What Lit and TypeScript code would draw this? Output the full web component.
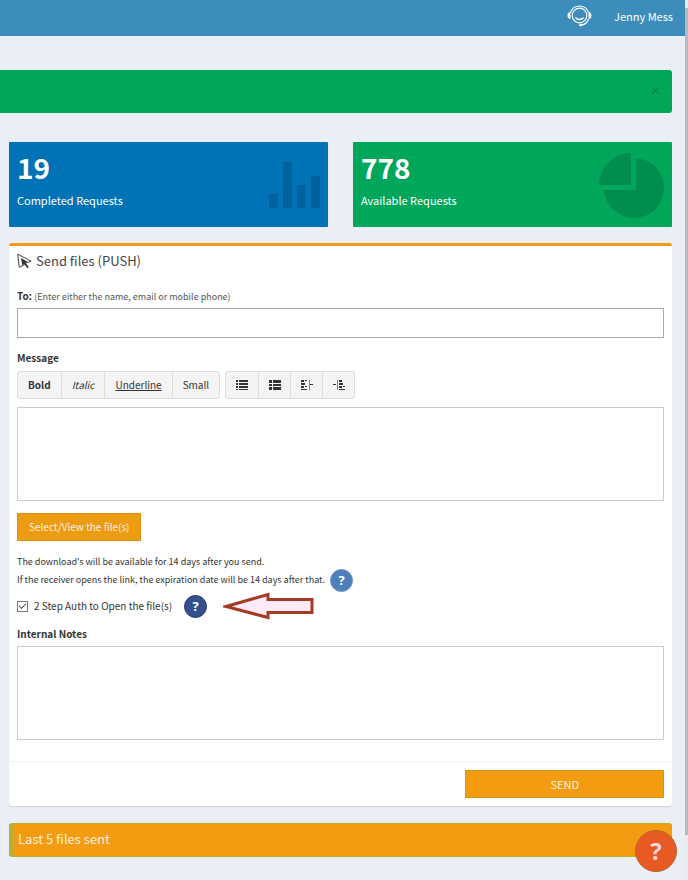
import { LitElement, html, css, svg } from "lit";
import { customElement, property } from "lit/decorators.js";

const listIcon = svg`<path d="M0 1h2v2H0zM3 1h9v2H3zM0 4h2v2H0zM3 4h9v2H3zM0 7h2v2H0zM3 7h9v2H3zM0 10h2v1H0zM3 10h9v1H3z"/>`;
const thListIcon = svg`<path d="M0 1h3v3H0zM4 1h8v3H4zM0 5h3v2H0zM4 5h8v2H4zM0 8h3v3H0zM4 8h8v3H4z"/>`;
const outdentIcon = svg`<path d="M0 1h3v2H0zM4 1h2v1H4zM0 4h4v2H0zM0 7h3v2H0zM4 7h2v1H4zM0 10h6v1H0zM9 5h3v1H9z"/><path d="M8 1h1v10H8z" opacity=".6"/>`;
const indentIcon = svg`<path d="M6 1h3v2H6zM6 4h4v2H6zM6 7h3v2H6zM10 7h2v1h-2zM6 10h6v1H6zM0 5h3v1H0z"/><path d="M4 1h1v10H4z" opacity=".6"/>`;

@customElement("help-dot")
export class HelpDot extends LitElement {
  @property() topic = "";

  static styles = css`
    :host {
      display: inline-flex;
      flex: none;
      --dot: #4e7fb8;
      --ring: #6b93c6;
    }
    .dot {
      width: 23px;
      height: 23px;
      padding: 0;
      border: 1px solid var(--ring);
      border-radius: 50%;
      background: var(--dot);
      color: #fff;
      font: 700 13px/20px "Open Sans", sans-serif;
      text-align: center;
    }
  `;

  render() {
    return html`<button class="dot" type="button" aria-label=${this.topic}>?</button>`;
  }
}

@customElement("app-root")
export class AppRoot extends LitElement {
  static styles = css`
    :host {
      display: block;
      min-height: 100vh;
      background: #ebeef4;
      color: #333;
      font: 10px/18px "Noto Sans CJK SC", "Noto Sans", sans-serif;
    }
    * {
      box-sizing: border-box;
    }
    h2,
    h3,
    p {
      margin: 0;
      font-weight: 400;
    }
    button,
    input,
    textarea {
      font: inherit;
      margin: 0;
    }
    .topbar {
      display: flex;
      align-items: center;
      justify-content: flex-end;
      gap: 22px;
      height: 36px;
      padding: 0 15px 4px 0;
      background: #3c8dbc;
      font-size: 11px;
    }
    .topbar a {
      color: #fff;
      text-decoration: none;
    }
    .topbar svg {
      display: block;
    }
    .alert {
      display: flex;
      align-items: center;
      justify-content: flex-end;
      height: 43px;
      margin: 34px 16px 0 0;
      padding: 0 12px 4px 0;
      background: #00a65a;
      border-radius: 0 3px 3px 0;
    }
    .close {
      width: 10px;
      height: 16px;
      padding: 0;
      border: 0;
      background: none;
      color: #05713f;
      font-size: 11px;
      line-height: 16px;
    }
    main {
      padding: 29px 16px 23px 9px;
    }
    .stats {
      display: grid;
      grid-template-columns: 1fr 1fr;
      gap: 25px;
    }
    .stat {
      display: flex;
      justify-content: space-between;
      height: 85px;
      padding: 8px;
      border-radius: 1px;
      color: #fff;
    }
    .stat svg {
      overflow: visible;
    }
    .blue {
      background: #0073b7;
    }
    .green {
      background: #00a65a;
    }
    .count {
      font-size: 28px;
      line-height: 34px;
      font-weight: 700;
    }
    .caption {
      margin-top: 7px;
      font-size: 11px;
    }
    .box {
      margin-top: 16px;
      border-top: 3px solid #f39c12;
      border-radius: 3px;
      background: #fff;
      box-shadow: 0 1px 1px rgba(0, 0, 0, 0.12);
    }
    .head {
      display: flex;
      align-items: center;
      gap: 4px;
      height: 30px;
      padding: 0 8px;
    }
    .head h2 {
      font-size: 13px;
      line-height: 20px;
      color: #444;
    }
    .body {
      padding: 11px 8px 21px;
    }
    .label {
      display: block;
      font-weight: 700;
      line-height: 18px;
    }
    .label small {
      font-size: 9px;
      font-weight: 400;
      color: #555;
    }
    .field {
      display: block;
      width: 100%;
      padding: 4px 8px;
      border: 1px solid #ccc;
      border-radius: 0;
      background: #fff;
      resize: none;
    }
    .line {
      height: 30px;
      margin: 2px 0 11px;
      border-color: #aaa;
    }
    .area {
      height: 94px;
    }
    .tools {
      display: flex;
      gap: 5px;
      margin: 4px 0 8px;
    }
    .group {
      display: flex;
      border: 1px solid #ddd;
      border-radius: 3px;
      background: #f4f4f4;
    }
    .tool {
      display: flex;
      align-items: center;
      justify-content: center;
      height: 26px;
      padding: 0 10px;
      border: 0;
      border-left: 1px solid #ddd;
      background: none;
      color: #333;
    }
    .tool:first-child {
      border-left: 0;
    }
    .glyph {
      width: 32px;
      padding: 0;
    }
    .tool svg {
      display: block;
      fill: #333;
    }
    .bold {
      font-weight: 700;
    }
    .italic {
      font-style: italic;
    }
    .underline {
      text-decoration: underline;
    }
    .orange {
      height: 28px;
      padding: 0 11px;
      border: 1px solid #e08e0b;
      background: #f39c12;
      color: #ffeedd;
    }
    .select {
      display: block;
      margin: 12px 0;
      background: #eb9c12;
    }
    .note {
      display: flex;
      align-items: center;
      gap: 5px;
      height: 18px;
      font-size: 9px;
    }
    .check {
      display: flex;
      align-items: center;
      height: 34px;
    }
    .check label {
      display: flex;
      align-items: center;
      gap: 6px;
      margin-right: 12px;
    }
    .box-input {
      appearance: none;
      width: 11px;
      height: 11px;
      border: 1px solid #777;
      background: #fff;
      display: grid;
      place-items: center;
    }
    .box-input:checked::before {
      content: "";
      width: 6px;
      height: 3px;
      margin-bottom: 2px;
      border: solid #555;
      border-width: 0 0 1px 1px;
      rotate: -45deg;
    }
    .dark {
      --dot: #35508c;
      --ring: #263a6e;
    }
    .arrow {
      display: block;
      margin-left: 16px;
    }
    .notes {
      margin: 2px 0 3px;
    }
    .foot {
      display: flex;
      justify-content: flex-end;
      padding: 8px;
      border-top: 1px solid #f4f4f4;
    }
    .send {
      width: calc(31% - 2px);
      border-color: #d0980f;
      font-size: 11px;
    }
    .recent {
      display: flex;
      align-items: center;
      height: 34px;
      margin-top: 17px;
      padding: 0 8px 2px 5px;
      border: 1px solid #b8b030;
      border-left-width: 4px;
      border-radius: 3px;
      background: #f39c12;
    }
    .recent h3 {
      color: #ffeedd;
      font-size: 13px;
      line-height: 20px;
    }
    .chat {
      position: fixed;
      right: 11px;
      bottom: 8px;
      width: 42px;
      height: 42px;
      padding: 0;
      border: 1px solid #b4652a;
      border-radius: 50%;
      background: #e85a24;
      color: #ffd8e0;
      font: 700 24px/38px "Open Sans", sans-serif;
    }
    .rail {
      position: fixed;
      top: 0;
      right: 0;
      bottom: 0;
      width: 3px;
      background: #e9ebee;
    }
    .thumb {
      height: 94%;
      margin-top: 8px;
      background: #b9babd;
    }
  `;

  private icon(shape: unknown) {
    return html`<svg width="12" height="12" viewBox="0 0 12 12" shape-rendering="crispEdges" aria-hidden="true">${shape}</svg>`;
  }

  render() {
    return html`
      <header class="topbar">
        <a href="#support" aria-label="Support">
          <svg width="25" height="22" viewBox="0 0 25 22" fill="none" stroke="#fff">
            <path d="M3.500 7.500A9.500 9.500 0 0 1 21.500 7.500" stroke-width="1.100" />
            <circle cx="12.500" cy="10.500" r="7.300" stroke-width="1.200" />
            <path d="M3.500 7v7C1.500 14 .5 12.500 .5 10.500S1.500 7 3.500 7zM21.500 7v7c2 0 3-1.500 3-3.500S23.500 7 21.500 7z" fill="#fff" stroke="none" />
            <path d="M8.500 12.500c1.200 2.600 6.800 2.600 8 0" stroke-width="1.600" />
            <path d="M21.500 14c-1 3.500-3.500 5.500-7 6" stroke-width="1.100" />
            <ellipse cx="14" cy="20" rx="2" ry="1.300" fill="#fff" stroke="none" />
          </svg>
        </a>
        <a href="#account">Jenny Mess</a>
      </header>

      <div class="alert" role="status">
        <button class="close" type="button" aria-label="Close">×</button>
      </div>

      <main>
        <section class="stats">
          <div class="stat blue">
            <div>
              <div class="count">19</div>
              <div class="caption">Completed Requests</div>
            </div>
            <svg width="51" height="66" viewBox="0 0 51 66" fill="#00629c" aria-hidden="true">
              <path d="M0 44h9v14H0zM14 12h9v46H14zM28 35h9v23h-9zM42 26h9v32h-9z" />
            </svg>
          </div>
          <div class="stat green">
            <div>
              <div class="count">778</div>
              <div class="caption">Available Requests</div>
            </div>
            <svg width="65" height="67" viewBox="0 0 65 67" fill="#008d4d" aria-hidden="true">
              <path d="M32 3v32H0A32 32 0 0 1 32 3zM37 8A30 30 0 1 1 5 40h32z" />
            </svg>
          </div>
        </section>

        <form class="box" @submit=${(e: Event) => e.preventDefault()}>
          <div class="head">
            <svg width="15" height="16" viewBox="0 0 15 16" fill="none" stroke="#444" aria-hidden="true">
              <path d="M8 11.500L2.200 14.200.7 1.200 14.200 8.200 10.500 9.500" stroke-width="1" />
              <path d="M4 5l7.500 4.200-2.700.6 3 4.400-1.500 1-2.900-4.500L5.300 12.500z" fill="#333" stroke="none" />
            </svg>
            <h2>Send files (PUSH)</h2>
          </div>
          <div class="body">
            <label class="label" for="to">To: <small>(Enter either the name, email or mobile phone)</small></label>
            <input class="field line" id="to" type="text" />

            <label class="label" for="message">Message</label>
            <div class="tools">
              <div class="group">
                <button class="tool bold" type="button">Bold</button>
                <button class="tool italic" type="button">Italic</button>
                <button class="tool underline" type="button">Underline</button>
                <button class="tool" type="button">Small</button>
              </div>
              <div class="group">
                <button class="tool glyph" type="button" aria-label="Bulleted list">${this.icon(listIcon)}</button>
                <button class="tool glyph" type="button" aria-label="Numbered list">${this.icon(thListIcon)}</button>
                <button class="tool glyph" type="button" aria-label="Outdent">${this.icon(outdentIcon)}</button>
                <button class="tool glyph" type="button" aria-label="Indent">${this.icon(indentIcon)}</button>
              </div>
            </div>
            <textarea class="field area" id="message"></textarea>

            <button class="orange select" type="button">Select/View the file(s)</button>

            <p class="note">The download's will be available for 14 days after you send.</p>
            <p class="note">
              If the receiver opens the link, the expiration date will be 14 days after that.
              <help-dot topic="About expiration"></help-dot>
            </p>
            <div class="check">
              <label><input class="box-input" type="checkbox" checked />2 Step Auth to Open the file(s)</label>
              <help-dot class="dark" topic="About 2 step auth"></help-dot>
              <svg class="arrow" width="92" height="28" viewBox="0 0 92 28" fill="#fdeaf6" stroke="#a53a25" stroke-width="3" aria-hidden="true">
                <path d="M3 14.500L45 2.500V7.500H89V20.500H45V25.500z" />
              </svg>
            </div>

            <label class="label notes" for="notes">Internal Notes</label>
            <textarea class="field area" id="notes"></textarea>
          </div>
          <div class="foot">
            <button class="orange send" type="submit">SEND</button>
          </div>
        </form>

        <section class="recent">
          <h3>Last 5 files sent</h3>
        </section>
      </main>

      <button class="chat" type="button" aria-label="Help">?</button>
      <div class="rail"><div class="thumb"></div></div>
    `;
  }
}
